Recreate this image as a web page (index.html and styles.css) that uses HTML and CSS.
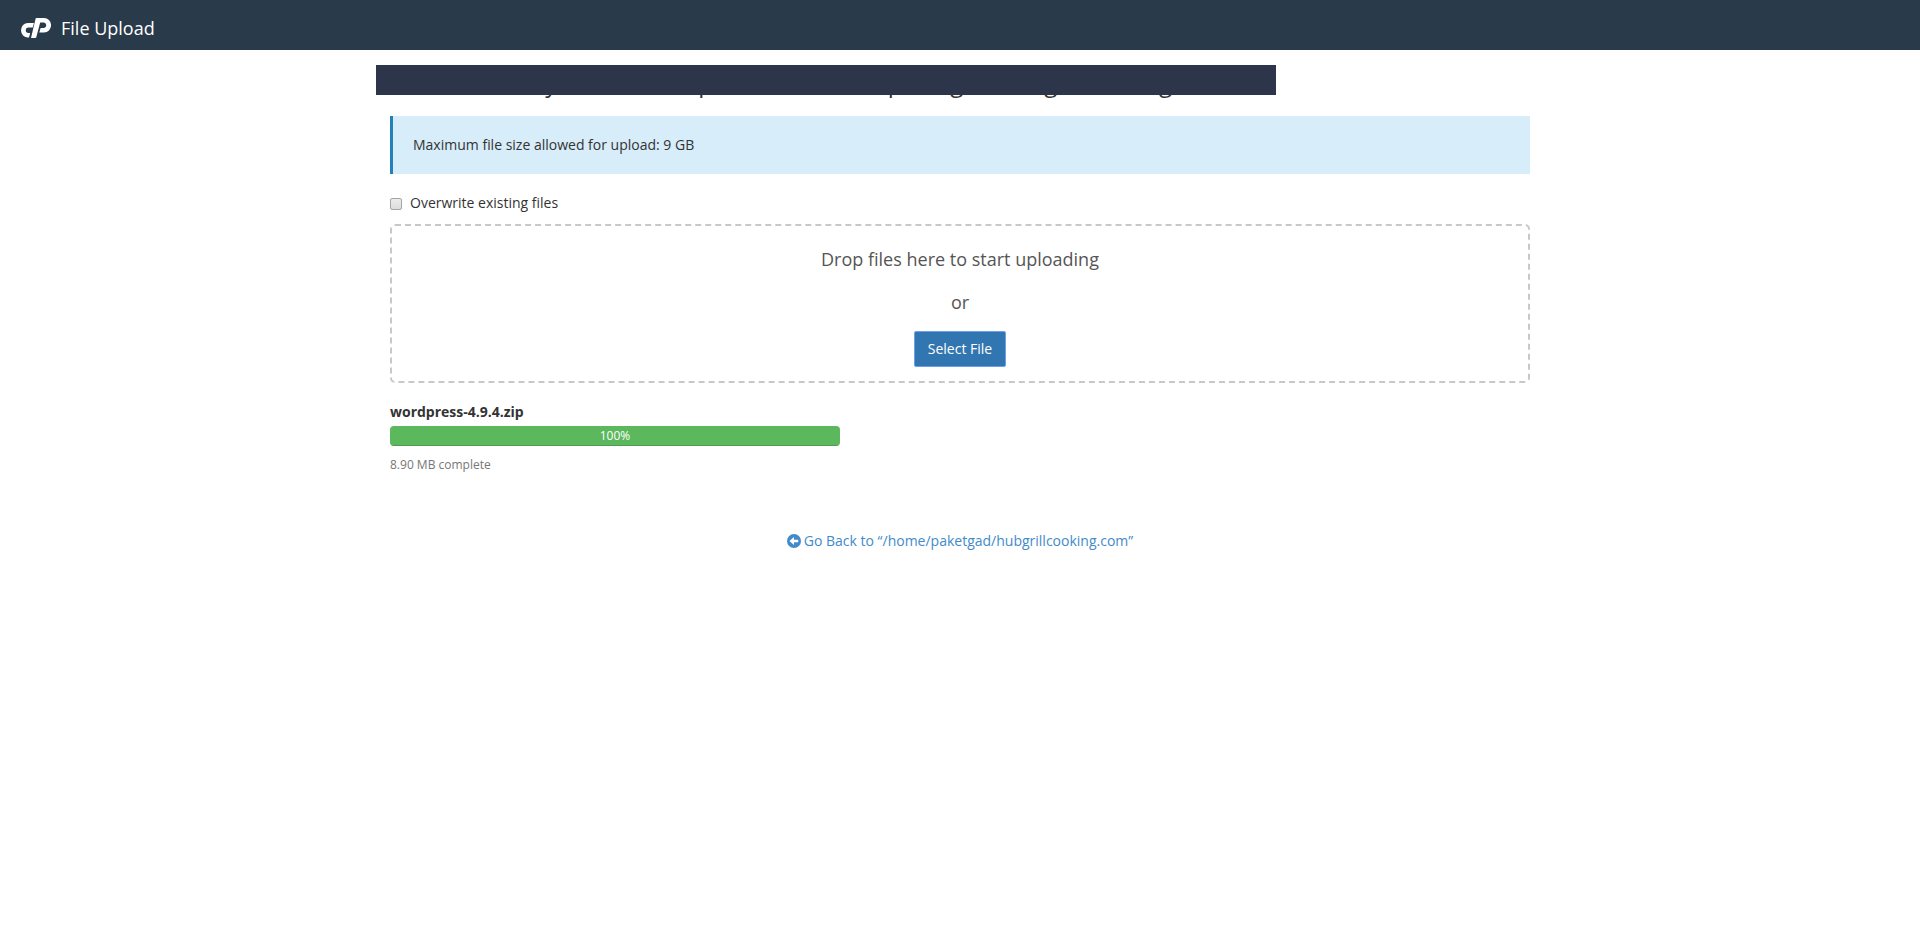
FILE: index.html
```html
<!DOCTYPE html>
<html lang="en">
<head>
<meta charset="utf-8">
<title>File Upload</title>
<link rel="stylesheet" href="styles.css">
</head>
<body>
<header class="navbar">
  <svg class="logo" viewBox="0 0 30 20" aria-hidden="true">
    <path fill="#fff" fill-rule="evenodd" d="M7 5h6l-1.300 4.500H7.500a2.700 2.700 0 0 0 0 5.500h1.700L8 19.500H7A7 7.250 0 0 1 7 5zM15.500 0H23a7 7.200 0 0 1 0 14.500h-4.700l1.300-4.500H23a2.800 2.800 0 0 0 0-5.500h-3.800L15.200 19.500a1 1 0 0 1-.9.500H10L14.500 1a1.200 1.200 0 0 1 1-1z"/>
  </svg>
  <span class="navbar-title">File Upload</span>
</header>
<main class="container">
  <h1 class="heading">Select the file you want to upload to “/home/paketgad/hubgrillcooking.com”.</h1>
  <div class="alert">Maximum file size allowed for upload: 9 GB</div>
  <label class="overwrite" for="overwrite"><input class="checkbox" type="checkbox" id="overwrite">Overwrite existing files</label>
  <section class="dropzone">
    <p class="drop-text">Drop files here to start uploading</p>
    <p class="drop-text">or</p>
    <button class="button" type="button">Select File</button>
  </section>
  <section class="upload">
    <div class="file-name">wordpress-4.9.4.zip</div>
    <div class="progress"><div class="progress-bar" style="width: 100%">100%</div></div>
    <div class="status">8.90 MB complete</div>
  </section>
  <a class="back" href="#"><svg class="back-icon" viewBox="0 0 14 14" aria-hidden="true"><circle cx="7" cy="7" r="7" fill="#428bca"/><path fill="#fff" d="M2.500 7 7 3v2.700h4.200v2.600H7V11z"/></svg>Go Back to “/home/paketgad/hubgrillcooking.com”</a>
</main>
</body>
</html>
```
FILE: styles.css
```css
* { box-sizing: border-box; }
body {
  margin: 0;
  background: #fff;
  color: #333;
  font: 14px/20px "Open Sans", "Noto Sans", sans-serif;
}
.navbar {
  display: flex;
  align-items: center;
  gap: 10px;
  height: 50px;
  padding: 6px 21px 0;
  background: #293a4a;
}
.logo { width: 30px; height: 20px; }
.navbar-title { color: #fff; font-size: 18px; line-height: 24px; }
.container {
  display: flex;
  flex-direction: column;
  max-width: 1170px;
  margin: 0 auto;
  padding: 18px 15px;
}
.heading {
  position: relative;
  margin: 0 0 18px;
  font-size: 24px;
  line-height: 30px;
  font-weight: 400;
}
.heading::after {
  content: "";
  position: absolute;
  top: -3px;
  left: -14px;
  width: 900px;
  max-width: 100%;
  height: 30px;
  background: #2c3549;
}
.alert {
  padding: 19px 20px;
  border-left: 3px solid #2380b8;
  background: #d7edf9;
}
.overwrite {
  display: flex;
  align-items: center;
  align-self: flex-start;
  gap: 8px;
  margin: 19px 0 11px;
}
.checkbox {
  appearance: none;
  width: 12px;
  height: 12px;
  margin: 2px 0 0;
  border: 1px solid #a5a5a5;
  border-radius: 2px;
  background: linear-gradient(#ececec, #dcdcdc);
}
.dropzone {
  display: flex;
  flex-direction: column;
  align-items: center;
  padding: 20px 20px 14px;
  border: 2px dashed #c8c8c8;
  border-radius: 5px;
}
.drop-text {
  margin: 0 0 17px;
  color: #555;
  font-size: 18px;
  line-height: 26px;
}
.drop-text:last-of-type { margin-bottom: 16px; }
.button {
  padding: 7px 13px;
  border: 1px solid #6d9eeb;
  border-radius: 2px;
  background: #3276b1;
  color: #fff;
  font: inherit;
}
.upload { margin: 19px 0 0; }
.file-name { font-weight: 700; }
.progress {
  width: 450px;
  max-width: 100%;
  margin: 4px 0 9px;
  border-radius: 4px;
  overflow: hidden;
  background: #f5f5f5;
}
.progress-bar {
  background: #5cb85c;
  box-shadow: inset 0 -1px 0 rgba(0, 0, 0, .15);
  color: #fff;
  font-size: 12px;
  line-height: 20px;
  text-align: center;
}
.status { color: #777; font-size: 12px; line-height: 20px; }
.back {
  display: flex;
  align-items: center;
  align-self: center;
  gap: 3px;
  margin-top: 56px;
  color: #428bca;
  text-decoration: none;
}
.back-icon { width: 14px; height: 14px; }
```
